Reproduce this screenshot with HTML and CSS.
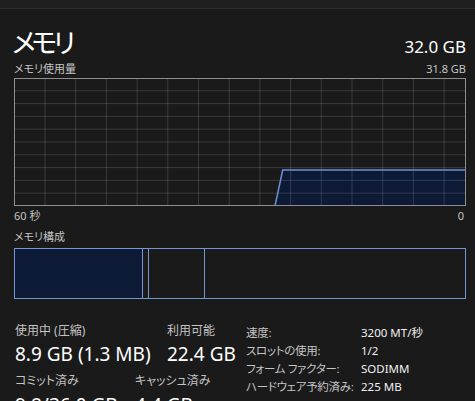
FILE: index.html
```html
<!DOCTYPE html>
<html lang="ja">

<head>
    <meta charset="utf-8">
    <meta name="viewport" content="width=device-width, initial-scale=1.0">
    <title>メモリ</title>
    <link rel="stylesheet" href="styles.css">
</head>

<body>

    <div class="topbar"></div>

    <main class="panel">
        <header class="title-row">
            <h1>メモリ</h1>
            <span class="total">32.0 GB</span>
        </header>

        <div class="label-row">
            <span>メモリ使用量</span>
            <span>31.8 GB</span>
        </div>

        <svg class="graph" width="452" height="128" viewBox="0 0 452 128">
            <polygon class="usage-fill" points="261,128 268.7,92 452,92 452,128" />
            <path class="grid" d="M31 0V128M61.7 0V128M92.4 0V128M123.1 0V128M153.8 0V128M184.5 0V128M215.2 0V128M245.9 0V128M276.6 0V128M307.3 0V128M338 0V128M368.7 0V128M399.4 0V128M430.1 0V128
                M0 12.8H452M0 25.6H452M0 38.4H452M0 51.2H452M0 64H452M0 76.8H452M0 89.6H452M0 102.4H452M0 115.2H452" />
            <polyline class="usage-line" points="261,128 268.7,92 451.5,92" />
            <rect class="frame" x="0.5" y="0.5" width="451" height="127" />
        </svg>

        <div class="label-row axis">
            <span>60 秒</span>
            <span>0</span>
        </div>

        <div class="label-row">
            <span>メモリ構成</span>
        </div>

        <div class="composition">
            <div class="seg in-use"></div>
            <div class="seg modified"></div>
            <div class="seg standby"></div>
            <div class="seg free"></div>
        </div>

        <section class="stats">
            <div class="left">
                <div class="pair">
                    <div class="stat used">
                        <div class="stat-label">使用中 (圧縮)</div>
                        <div class="stat-value">8.9 GB (1.3 MB)</div>
                    </div>
                    <div class="stat">
                        <div class="stat-label">利用可能</div>
                        <div class="stat-value">22.4 GB</div>
                    </div>
                </div>
                <div class="pair">
                    <div class="stat commit">
                        <div class="stat-label">コミット済み</div>
                        <div class="stat-value">9.8/36.0 GB</div>
                    </div>
                    <div class="stat">
                        <div class="stat-label">キャッシュ済み</div>
                        <div class="stat-value">4.4 GB</div>
                    </div>
                </div>
            </div>

            <dl class="specs">
                <dt>速度:</dt>
                <dd>3200 MT/秒</dd>
                <dt>スロットの使用:</dt>
                <dd>1/2</dd>
                <dt>フォーム ファクター:</dt>
                <dd>SODIMM</dd>
                <dt>ハードウェア予約済み:</dt>
                <dd>225 MB</dd>
            </dl>
        </section>
    </main>

</body>

</html>
```

FILE: styles.css
```css
body {
    margin: 0;
    background-color: #1a1a1a;
    color: #ffffff;
    font-family: "Noto Sans", "Noto Sans CJK JP", sans-serif;
    font-feature-settings: "palt";
    overflow: hidden;
    height: 401px;
}

.topbar {
    height: 8px;
    background-color: #1e1e1e;
    border-bottom: 1px solid #2c2c2c;
}

.panel {
    padding: 0 9px 0 14px;
}

.title-row {
    display: flex;
    justify-content: space-between;
    align-items: baseline;
    margin-top: 16px;
}

h1 {
    margin: 0 0 0 -2px;
    font-size: 27px;
    font-weight: normal;
    line-height: 36px;
    letter-spacing: -4px;
}

.total {
    font-size: 17px;
}

.label-row {
    display: flex;
    justify-content: space-between;
    font-size: 11px;
    line-height: 16px;
    color: #c4c4c4;
}

.graph {
    display: block;
    margin-top: 1px;
}

.grid {
    fill: none;
    stroke: rgba(255, 255, 255, 0.14);
    stroke-width: 1;
}

.frame {
    fill: none;
    stroke: #8e8e8e;
    stroke-width: 1;
}

.usage-fill {
    fill: #0d1a35;
}

.usage-line {
    fill: none;
    stroke: #6f90cf;
    stroke-width: 1.5;
}

.axis {
    margin-top: 2px;
    margin-bottom: 5px;
    padding-right: 2px;
}

.composition {
    display: flex;
    height: 49px;
    margin-top: 3px;
    border: 1px solid #7494d3;
}

.seg {
    border-right: 1px solid #7494d3;
}

.in-use {
    width: 127px;
    background-color: #0c1a36;
}

.modified {
    width: 5px;
}

.standby {
    width: 55px;
}

.free {
    flex: 1;
    border-right: none;
}

.stats {
    display: flex;
    margin-top: 24px;
    padding-left: 1px;
}

.left {
    width: 231px;
}

.pair {
    display: flex;
}

.pair+.pair {
    margin-top: 6px;
}

.stat-label {
    font-size: 12px;
    line-height: 16px;
    height: 16px;
    color: #c4c4c4;
}

.stat-value {
    font-size: 19px;
    line-height: 26px;
    height: 26px;
    margin-top: 2px;
}

.pair+.pair .stat-value {
    margin-top: 3px;
}

.used {
    width: 152px;
}

.commit {
    width: 120px;
}

.specs {
    display: grid;
    grid-template-columns: 115px auto;
    grid-auto-rows: 18px;
    margin: 2px 0 0;
    font-size: 11.5px;
    line-height: 16px;
    white-space: nowrap;
}

.specs dt {
    color: #c4c4c4;
    letter-spacing: -0.3px;
}

.specs dd {
    margin: 0;
    color: #f0f0f0;
}
```
